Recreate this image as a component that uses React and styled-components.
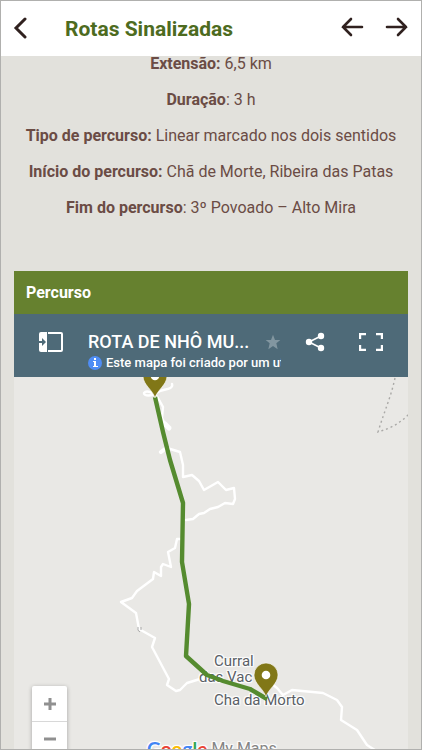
import React from 'react'
import styled, { createGlobalStyle } from 'styled-components'

const GlobalStyle = createGlobalStyle`
  * {
    box-sizing: border-box;
  }

  body {
    margin: 0;
    font-family: Roboto, 'Liberation Sans', sans-serif;
  }
`

const Screen = styled.div`
  display: flex;
  flex-direction: column;
  height: 100vh;
  overflow: hidden;
  border: 1px solid #b0b0ae;
  background: #e2e1dc;
`

const Header = styled.header`
  display: flex;
  align-items: center;
  flex: 0 0 auto;
  height: 55px;
  padding: 0 12px 0 8px;
  background: #fff;
`

const HeaderTitle = styled.h1`
  flex: 1 1 auto;
  margin: 0 0 0 32px;
  color: #4d6b20;
  font-size: 21px;
  font-weight: 700;
  line-height: 24px;
`

const HeaderNav = styled.nav`
  display: flex;
  gap: 20px;
`

const IconButton = styled.button`
  display: flex;
  align-items: center;
  justify-content: center;
  flex: 0 0 auto;
  width: 24px;
  height: 24px;
  padding: 0;
  border: 0;
  background: none;
  color: ${props => props.$color || '#30211f'};
  cursor: pointer;
`

const Content = styled.main`
  display: flex;
  flex-direction: column;
  flex: 1 1 auto;
  min-height: 0;
  padding: 0 13px;
`

const Details = styled.section`
  display: flex;
  flex-direction: column;
  align-items: center;
  gap: 20px;
  flex: 0 0 auto;
  margin-bottom: 55px;
`

const Detail = styled.p`
  margin: 0;
  color: #6b4c45;
  font-size: 16px;
  line-height: 16px;
  text-align: center;
  white-space: nowrap;
`

const Panel = styled.section`
  display: flex;
  flex-direction: column;
  flex: 1 1 auto;
  min-height: 0;
`

const PanelTitle = styled.h2`
  flex: 0 0 auto;
  margin: 0;
  padding: 0 12px;
  background: #66812f;
  color: #fff;
  font-size: 16px;
  font-weight: 700;
  line-height: 43px;
`

const MapBar = styled.div`
  display: flex;
  flex: 0 0 auto;
  height: 63px;
  padding: 16px 25px 0 25px;
  background: #4e6a78;
`

const MapInfo = styled.div`
  flex: 1 1 auto;
  min-width: 0;
  margin: 0 22px 0 25px;
`

const MapTitleRow = styled.div`
  display: flex;
  align-items: center;
  justify-content: space-between;
  height: 24px;
`

const MapTitle = styled.h3`
  overflow: hidden;
  margin: 0;
  color: #fff;
  font-size: 18px;
  font-weight: 500;
  line-height: 24px;
  white-space: nowrap;
`

const MapNotice = styled.div`
  display: flex;
  align-items: center;
  gap: 4px;
  overflow: hidden;
  color: #fff;
  font-size: 13px;
  font-weight: 500;
  line-height: 18px;
  white-space: nowrap;

  svg {
    flex: 0 0 auto;
  }
`

const MapActions = styled.div`
  display: flex;
  gap: 32px;
`

const MapCanvas = styled.div`
  position: relative;
  flex: 1 1 auto;
  min-height: 0;
  overflow: hidden;
  background: #e9e8e5;
`

const MapLayer = styled.svg`
  position: absolute;
  top: 0;
  left: 0;
`

const MapLabel = styled.span`
  position: absolute;
  top: ${props => props.$y}px;
  left: ${props => props.$x}px;
  color: #5a5f66;
  font-size: 15px;
  line-height: 15px;
  white-space: nowrap;
  text-shadow: 0 0 2px #fff, 1px 1px 1px #fff, -1px -1px 1px #fff,
    1px -1px 1px #fff, -1px 1px 1px #fff;
`

const ZoomControl = styled.div`
  position: absolute;
  bottom: -7px;
  left: 18px;
  width: 35px;
  border-radius: 2px;
  background: #fff;
  box-shadow: 0 1px 4px rgba(0, 0, 0, 0.3);
`

const ZoomButton = styled.button`
  display: flex;
  align-items: center;
  justify-content: center;
  width: 100%;
  height: 35px;
  padding: 0;
  border: 0;
  background: none;
  cursor: pointer;

  & + & {
    border-top: 1px solid #d8d8d8;
  }
`

const Brand = styled.div`
  position: absolute;
  bottom: -12px;
  left: 133px;
  display: flex;
  gap: 4px;
  color: #858585;
  font-size: 16px;
  line-height: 24px;
  white-space: nowrap;
  text-shadow: 0 0 2px #fff, 1px 1px 1px #fff, -1px -1px 1px #fff,
    1px -1px 1px #fff, -1px 1px 1px #fff;
`

const BrandName = styled.span`
  font-family: Lato, sans-serif;
  font-size: 19px;
  font-weight: 700;
`

const BrandLetter = styled.span`
  color: ${props => props.$color};
`

const details = [
  { label: 'Extensão:', value: ' 6,5 km' },
  { label: 'Duração', value: ': 3 h' },
  { label: 'Tipo de percurso:', value: ' Linear marcado nos dois sentidos' },
  { label: 'Início do percurso:', value: ' Chã de Morte, Ribeira das Patas' },
  { label: 'Fim do percurso', value: ': 3º Povoado – Alto Mira' }
]

const labels = [
  { text: 'Curral', x: 200, y: 277 },
  { text: 'das Vac', x: 185, y: 293 },
  { text: 'Cha da Morto', x: 200, y: 316 }
]

const brandLetters = [
  ['G', '#4285f4'],
  ['o', '#ea4335'],
  ['o', '#fbbc05'],
  ['g', '#4285f4'],
  ['l', '#34a853'],
  ['e', '#ea4335']
]

const roads = [
  'M172 384C174 390 162 389 158 392C152 397 143 396 144 393C146 390 154 392 158 398L163 407L162 418L165 424',
  'M160 452L167 448L180 452L183 465V477L192 475L199 481L204 490L218 482L226 490L234 488L235 499L233 504L225 503L218 507L210 509L204 513L199 514L193 519L186 520',
  'M180 539L177 539L175 548L168 552L171 567L163 564L161 567V576L154 572L153 579L137 591L132 598L121 602L136 613L139 629L155 638L152 647L169 679L167 685L176 691L180 690L187 683L200 679L210 676',
  'M272 684L277 688L283 695L292 690L323 693L337 700L342 707L341 720L357 730L367 745L378 752'
]

const mapSize = { width: 394, height: 372, viewBox: '14 377 394 372' }

function Pin({ x, y }) {
  return (
    <g transform={`translate(${x} ${y})`}>
      <path
        d="M0 0C-2 -8 -12 -13 -12 -22A12 12 0 0 1 12 -22C12 -13 2 -8 0 0Z"
        fill="#817717"
        stroke="#fff"
        strokeOpacity="0.6"
        strokeWidth="1"
      />
      <circle cx="0" cy="-22" r="4.3" fill="#fff" />
    </g>
  )
}

function RouteMap() {
  return (
    <MapCanvas>
      <MapLayer {...mapSize} aria-hidden="true">
        <g fill="none" stroke="#fff" strokeWidth="2.4" strokeLinejoin="round" strokeLinecap="round">
          {roads.map(d => (
            <path key={d} d={d} />
          ))}
          <path d="M165 424L169 428" strokeWidth="5" />
          <path d="M161 452L165 449" strokeWidth="4" />
        </g>
        <path
          d="M395 378C391 397 384 412 378 432C391 428 399 424 409 414"
          fill="none"
          stroke="#aaa9a7"
          strokeWidth="1.4"
          strokeDasharray="2 3"
        />
        <path d="M138 627Q137 631 140 632M141 627V630" fill="none" stroke="#aaa" />
      </MapLayer>
      {labels.map(({ text, x, y }) => (
        <MapLabel key={text} $x={x} $y={y}>
          {text}
        </MapLabel>
      ))}
      <MapLayer {...mapSize} aria-hidden="true">
        <path
          d="M155 397L163 432L170 460L183 503L182 562L189 604L186 656L207 675L223 681L250 689L267 699"
          fill="none"
          stroke="#558b2f"
          strokeWidth="4.4"
          strokeLinejoin="round"
        />
        <Pin x={155} y={398} />
        <Pin x={266} y={697} />
      </MapLayer>
      <ZoomControl>
        <ZoomButton aria-label="Aumentar">
          <svg width="14" height="14" viewBox="0 0 14 14">
            <path d="M7 1V13M1 7H13" stroke="#909090" strokeWidth="3" />
          </svg>
        </ZoomButton>
        <ZoomButton aria-label="Diminuir">
          <svg width="14" height="14" viewBox="0 0 14 14">
            <path d="M1 7H13" stroke="#909090" strokeWidth="3" />
          </svg>
        </ZoomButton>
      </ZoomControl>
      <Brand>
        <BrandName>
          {brandLetters.map(([letter, color], i) => (
            <BrandLetter key={i} $color={color}>
              {letter}
            </BrandLetter>
          ))}
        </BrandName>
        <span>My Maps</span>
      </Brand>
    </MapCanvas>
  )
}

export default function App() {
  return (
    <Screen>
      <GlobalStyle />
      <Header>
        <IconButton aria-label="Voltar">
          <svg
            width="24"
            height="24"
            viewBox="0 0 24 24"
            fill="none"
            stroke="currentColor"
            strokeWidth="3"
            strokeLinecap="round"
          >
            <path d="M16 2L7 11L16 20" />
          </svg>
        </IconButton>
        <HeaderTitle>Rotas Sinalizadas</HeaderTitle>
        <HeaderNav>
          <IconButton aria-label="Anterior">
            <svg
              width="24"
              height="24"
              viewBox="0 0 24 24"
              fill="none"
              stroke="currentColor"
              strokeWidth="2.6"
              strokeLinecap="round"
            >
              <path d="M10 2L2 10L10 18M2 10H21" />
            </svg>
          </IconButton>
          <IconButton aria-label="Seguinte">
            <svg
              width="24"
              height="24"
              viewBox="0 0 24 24"
              fill="none"
              stroke="currentColor"
              strokeWidth="2.6"
              strokeLinecap="round"
            >
              <path d="M13 2L21 10L13 18M21 10H2" />
            </svg>
          </IconButton>
        </HeaderNav>
      </Header>
      <Content>
        <Details>
          {details.map(({ label, value }) => (
            <Detail key={label}>
              <strong>{label}</strong>
              {value}
            </Detail>
          ))}
        </Details>
        <Panel>
          <PanelTitle>Percurso</PanelTitle>
          <MapBar>
            <IconButton $color="#fff" aria-label="Abrir legenda">
              <svg width="24" height="20" viewBox="0 0 24 20">
                <path d="M2 0H8V20H2Q0 20 0 18V2Q0 0 2 0Z" fill="currentColor" />
                <path d="M0 9H3V6L7 10L3 14V11H0Z" fill="#4e6a78" />
                <path d="M9 1H22Q23 1 23 2V18Q23 19 22 19H9" fill="none" stroke="currentColor" strokeWidth="2" />
              </svg>
            </IconButton>
            <MapInfo>
              <MapTitleRow>
                <MapTitle>ROTA DE NHÔ MU...</MapTitle>
                <svg width="16" height="16" viewBox="0 0 24 24" fill="#8296a0">
                  <path d="M12 1L15 9H23L17 14L19 23L12 18L5 23L7 14L1 9H9Z" />
                </svg>
              </MapTitleRow>
              <MapNotice>
                <svg width="14" height="14" viewBox="0 0 14 14">
                  <circle cx="7" cy="7" r="7" fill="#4f8df5" />
                  <path d="M6 2H8V4H6ZM5 5H8V10H10V11H5V10H6V6H5Z" fill="#fff" />
                </svg>
                Este mapa foi criado por um utilizador
              </MapNotice>
            </MapInfo>
            <MapActions>
              <IconButton $color="#fff" aria-label="Partilhar">
                <svg width="20" height="20" viewBox="0 0 20 20" fill="currentColor">
                  <path d="M4 10L16 4M4 10L16 16" stroke="currentColor" strokeWidth="1.6" />
                  <circle cx="4" cy="10" r="3.2" />
                  <circle cx="16" cy="4" r="3.2" />
                  <circle cx="16" cy="16" r="3.2" />
                </svg>
              </IconButton>
              <IconButton $color="#fff" aria-label="Ecrã inteiro">
                <svg width="24" height="18" viewBox="0 0 24 18" fill="none" stroke="currentColor" strokeWidth="2.4">
                  <path d="M7 1H1V6M17 1H23V6M1 12V17H7M23 12V17H17" />
                </svg>
              </IconButton>
            </MapActions>
          </MapBar>
          <RouteMap />
        </Panel>
      </Content>
    </Screen>
  )
}
